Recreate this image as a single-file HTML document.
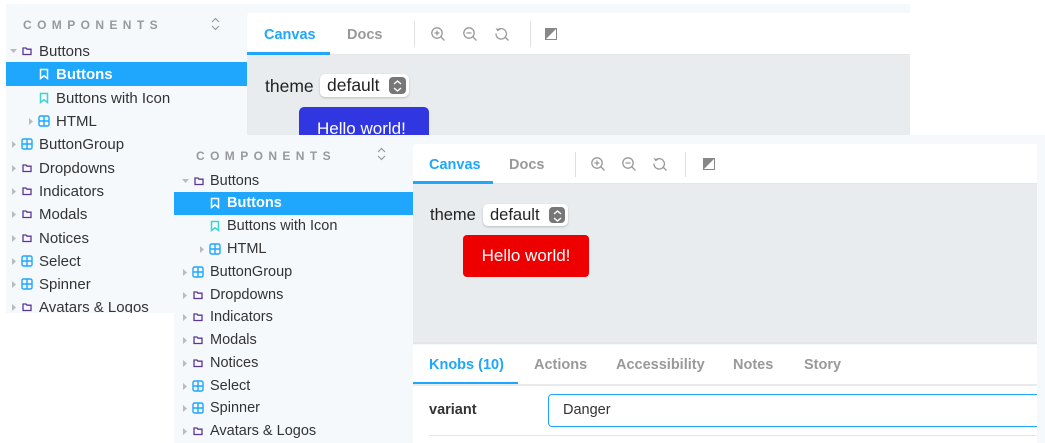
<!DOCTYPE html>
<html><head><meta charset="utf-8">
<style>
*{margin:0;padding:0;box-sizing:border-box}
body{width:1045px;height:443px;background:#fff;position:relative;overflow:hidden;font-family:"Liberation Sans",Arial,sans-serif;color:#333}
.a{position:absolute}
.bg{background:#f6f9fc}
.row{position:absolute;height:20px;line-height:20px;white-space:nowrap}
.hdr{position:absolute;font-size:12px;font-weight:bold;letter-spacing:5.4px;color:#999}
.sel{background:#1ea7fd;color:#fff;font-weight:bold}
.tab{position:absolute;font-weight:bold;font-size:14.5px;color:#999}
.tab.on{color:#1ea7fd}
.sep{position:absolute;width:1px;background:#e0e0e0}
svg{position:absolute;overflow:visible}
</style></head><body>
<svg width="0" height="0" style="position:absolute">
<defs>
<g id="fold"><path d="M2 3h3l1 1.2H10v5.3H2z" fill="none" stroke="#5b3596" stroke-width="1.3"/></g>
<g id="comp"><rect x="1" y="1" width="10" height="10" rx="1.5" fill="none" stroke="#1ea7fd" stroke-width="1.4"/><path d="M6 1v10M1 6h10" stroke="#1ea7fd" stroke-width="1.4"/></g>
<g id="bm"><path d="M2.5 1.5h7v9L6 7.8 2.5 10.5z" fill="none" stroke="#37d5d3" stroke-width="1.5"/></g>
<g id="bmw"><path d="M2.5 1.5h7v9L6 7.8 2.5 10.5z" fill="none" stroke="#fff" stroke-width="1.5"/></g>
<g id="car"><path d="M0 0l4 3.5-4 3.5z" fill="#bbb"/></g>
<g id="card"><path d="M0 0l7 0-3.5 4z" fill="#bbb"/></g>
<g id="zin"><circle cx="6" cy="6" r="5.2" fill="none" stroke="#999" stroke-width="1.3"/><path d="M6 3.5v5M3.5 6h5M10 10l3.5 3.5" stroke="#999" stroke-width="1.3"/></g>
<g id="zout"><circle cx="6" cy="6" r="5.2" fill="none" stroke="#999" stroke-width="1.3"/><path d="M3.5 6h5M10 10l3.5 3.5" stroke="#999" stroke-width="1.3"/></g>
<g id="zre"><path d="M2.2 3.5A5.2 5.2 0 1 1 1 6.5" fill="none" stroke="#999" stroke-width="1.3"/><path d="M0.5 1l2 3.3 3-1.6z" fill="#999"/><path d="M10 10l3.5 3.5" stroke="#999" stroke-width="1.3"/></g>
<g id="bgi"><rect x="0.5" y="0.5" width="11" height="11" fill="#fff" stroke="#888"/><path d="M0.5 11.5L11.5 0.5H0.5z" fill="#888"/></g>
<g id="tog"><path d="M0 4l3.5-3.5L7 4M0 8l3.5 3.5L7 8" fill="none" stroke="#999" stroke-width="1.2"/></g>
</defs></svg>

<!-- ===== First screenshot ===== -->
<div class="a bg" style="left:6px;top:4px;width:904px;height:131px"></div>
<div class="a bg" style="left:6px;top:4px;width:241px;height:309px"></div>
<div class="hdr" style="left:23px;top:18px">COMPONENTS</div>
<svg style="left:212px;top:18px" width="8" height="12"><use href="#tog"/></svg>
<div class="a sel" style="left:6px;top:62px;width:241px;height:24px"></div>
<div style="font-size:15px">
<svg style="left:10px;top:49px" width="8" height="5"><use href="#card"/></svg>
<svg style="left:21px;top:45px" width="12" height="12"><use href="#fold"/></svg>
<div class="row" style="left:39px;top:42px">Buttons</div>
<svg style="left:38px;top:68px" width="12" height="12"><use href="#bmw"/></svg>
<div class="row" style="left:56px;top:65px;color:#fff;font-weight:bold">Buttons</div>
<svg style="left:38px;top:92px" width="12" height="12"><use href="#bm"/></svg>
<div class="row" style="left:56px;top:89px">Buttons with Icon</div>
<svg style="left:29px;top:118px" width="5" height="7"><use href="#car"/></svg>
<svg style="left:38px;top:115px" width="12" height="12"><use href="#comp"/></svg>
<div class="row" style="left:56px;top:112px">HTML</div>
<svg style="left:12px;top:141px" width="5" height="7"><use href="#car"/></svg>
<svg style="left:21px;top:138px" width="12" height="12"><use href="#comp"/></svg>
<div class="row" style="left:39px;top:135px">ButtonGroup</div>
<svg style="left:12px;top:165px" width="5" height="7"><use href="#car"/></svg>
<svg style="left:21px;top:162px" width="12" height="12"><use href="#fold"/></svg>
<div class="row" style="left:39px;top:159px">Dropdowns</div>
<svg style="left:12px;top:188px" width="5" height="7"><use href="#car"/></svg>
<svg style="left:21px;top:185px" width="12" height="12"><use href="#fold"/></svg>
<div class="row" style="left:39px;top:182px">Indicators</div>
<svg style="left:12px;top:211px" width="5" height="7"><use href="#car"/></svg>
<svg style="left:21px;top:208px" width="12" height="12"><use href="#fold"/></svg>
<div class="row" style="left:39px;top:205px">Modals</div>
<svg style="left:12px;top:235px" width="5" height="7"><use href="#car"/></svg>
<svg style="left:21px;top:232px" width="12" height="12"><use href="#fold"/></svg>
<div class="row" style="left:39px;top:229px">Notices</div>
<svg style="left:12px;top:258px" width="5" height="7"><use href="#car"/></svg>
<svg style="left:21px;top:255px" width="12" height="12"><use href="#comp"/></svg>
<div class="row" style="left:39px;top:252px">Select</div>
<svg style="left:12px;top:281px" width="5" height="7"><use href="#car"/></svg>
<svg style="left:21px;top:278px" width="12" height="12"><use href="#comp"/></svg>
<div class="row" style="left:39px;top:275px">Spinner</div>
<svg style="left:12px;top:304px" width="5" height="7"><use href="#car"/></svg>
<svg style="left:21px;top:301px" width="12" height="12"><use href="#fold"/></svg>
<div class="row" style="left:39px;top:298px;height:15px;overflow:hidden">Avatars &amp; Logos</div>
</div>
<!-- main 1 -->
<div class="a" style="left:247px;top:13px;width:663px;height:42px;background:#fff;border-bottom:1px solid #e6e6e6;border-radius:4px 0 0 0"></div>
<div class="a" style="left:247px;top:55px;width:663px;height:80px;background:#e9ecee"></div>
<div class="tab on" style="left:264px;top:27px">Canvas</div>
<div class="a" style="left:247px;top:52px;width:83px;height:3px;background:#1ea7fd"></div>
<div class="tab" style="left:347px;top:27px">Docs</div>
<div class="sep" style="left:414px;top:21px;height:26px"></div>
<svg style="left:431px;top:27px" width="14" height="14"><use href="#zin"/></svg>
<svg style="left:463px;top:27px" width="14" height="14"><use href="#zout"/></svg>
<svg style="left:495px;top:27px" width="14" height="14"><use href="#zre"/></svg>
<div class="sep" style="left:530px;top:21px;height:26px"></div>
<svg style="left:545px;top:28px" width="12" height="12"><use href="#bgi"/></svg>
<div class="a" style="left:265px;top:76px;font-size:17.5px;color:#222">theme</div>
<div class="a" style="left:320px;top:74px;width:89px;height:23px;background:#fff;border-radius:5px;box-shadow:0 1px 2px rgba(0,0,0,.2);font-size:17.5px;color:#222;padding-left:7px;line-height:23px">default<div class="a" style="right:3px;top:3px;width:17px;height:17px;background:#777;border-radius:4px"><svg style="left:5px;top:3px" width="7" height="12"><path d="M0 4l3.5-3L7 4M0 8l3.5 3L7 8" fill="none" stroke="#fff" stroke-width="1.4"/></svg></div></div>
<div class="a" style="left:299px;top:107px;width:130px;height:28px;background:#3137e0;border-radius:5px 5px 0 0;overflow:hidden"><div class="a" style="left:18px;top:12px;color:#fff;font-size:17px;white-space:nowrap">Hello world!</div></div>

<!-- ===== Second screenshot ===== -->
<div class="a bg" style="left:174px;top:135px;width:871px;height:308px"></div>
<div class="hdr" style="left:196px;top:149px">COMPONENTS</div>
<svg style="left:378px;top:148px" width="8" height="12"><use href="#tog"/></svg>
<div class="a sel" style="left:174px;top:192px;width:239px;height:23px"></div>
<div style="font-size:14.5px">
<svg style="left:182px;top:179px" width="8" height="5"><use href="#card"/></svg>
<svg style="left:193px;top:175px" width="12" height="12"><use href="#fold"/></svg>
<div class="row" style="left:210px;top:171px">Buttons</div>
<svg style="left:209px;top:197px" width="12" height="12"><use href="#bmw"/></svg>
<div class="row" style="left:227px;top:193px;color:#fff;font-weight:bold">Buttons</div>
<svg style="left:209px;top:220px" width="12" height="12"><use href="#bm"/></svg>
<div class="row" style="left:227px;top:216px">Buttons with Icon</div>
<svg style="left:200px;top:246px" width="5" height="7"><use href="#car"/></svg>
<svg style="left:209px;top:243px" width="12" height="12"><use href="#comp"/></svg>
<div class="row" style="left:227px;top:239px">HTML</div>
<svg style="left:183px;top:269px" width="5" height="7"><use href="#car"/></svg>
<svg style="left:192px;top:266px" width="12" height="12"><use href="#comp"/></svg>
<div class="row" style="left:210px;top:262px">ButtonGroup</div>
<svg style="left:183px;top:292px" width="5" height="7"><use href="#car"/></svg>
<svg style="left:192px;top:289px" width="12" height="12"><use href="#fold"/></svg>
<div class="row" style="left:210px;top:285px">Dropdowns</div>
<svg style="left:183px;top:314px" width="5" height="7"><use href="#car"/></svg>
<svg style="left:192px;top:311px" width="12" height="12"><use href="#fold"/></svg>
<div class="row" style="left:210px;top:307px">Indicators</div>
<svg style="left:183px;top:337px" width="5" height="7"><use href="#car"/></svg>
<svg style="left:192px;top:334px" width="12" height="12"><use href="#fold"/></svg>
<div class="row" style="left:210px;top:330px">Modals</div>
<svg style="left:183px;top:360px" width="5" height="7"><use href="#car"/></svg>
<svg style="left:192px;top:357px" width="12" height="12"><use href="#fold"/></svg>
<div class="row" style="left:210px;top:353px">Notices</div>
<svg style="left:183px;top:383px" width="5" height="7"><use href="#car"/></svg>
<svg style="left:192px;top:380px" width="12" height="12"><use href="#comp"/></svg>
<div class="row" style="left:210px;top:376px">Select</div>
<svg style="left:183px;top:405px" width="5" height="7"><use href="#car"/></svg>
<svg style="left:192px;top:402px" width="12" height="12"><use href="#comp"/></svg>
<div class="row" style="left:210px;top:398px">Spinner</div>
<svg style="left:183px;top:428px" width="5" height="7"><use href="#car"/></svg>
<svg style="left:192px;top:425px" width="12" height="12"><use href="#fold"/></svg>
<div class="row" style="left:210px;top:421px">Avatars &amp; Logos</div>
</div>
<!-- main 2 -->
<div class="a" style="left:413px;top:144px;width:624px;height:40px;background:#fff;border-bottom:1px solid #e6e6e6;border-radius:4px 0 0 0"></div>
<div class="a" style="left:413px;top:184px;width:624px;height:160px;background:#e9ecee;border-bottom:2px solid #e2e4e6"></div>
<div class="tab on" style="left:429px;top:157px">Canvas</div>
<div class="a" style="left:413px;top:181px;width:80px;height:3px;background:#1ea7fd"></div>
<div class="tab" style="left:509px;top:157px">Docs</div>
<div class="sep" style="left:575px;top:152px;height:25px"></div>
<svg style="left:591px;top:157px" width="14" height="14"><use href="#zin"/></svg>
<svg style="left:622px;top:157px" width="14" height="14"><use href="#zout"/></svg>
<svg style="left:653px;top:157px" width="14" height="14"><use href="#zre"/></svg>
<div class="sep" style="left:685px;top:152px;height:25px"></div>
<svg style="left:703px;top:158px" width="12" height="12"><use href="#bgi"/></svg>
<div class="a" style="left:430px;top:206px;font-size:16.5px;color:#222">theme</div>
<div class="a" style="left:483px;top:204px;width:85px;height:22px;background:#fff;border-radius:5px;box-shadow:0 1px 2px rgba(0,0,0,.2);font-size:16.5px;color:#222;padding-left:7px;line-height:22px">default<div class="a" style="right:3px;top:3px;width:16px;height:16px;background:#777;border-radius:4px"><svg style="left:4.5px;top:2.5px" width="7" height="12"><path d="M0 4l3.5-3L7 4M0 8l3.5 3L7 8" fill="none" stroke="#fff" stroke-width="1.4"/></svg></div></div>
<div class="a" style="left:463px;top:235px;width:126px;height:42px;background:#ee0000;border-radius:4px;color:#fff;font-size:17px;line-height:42px;text-align:center">Hello world!</div>
<!-- addons -->
<div class="a" style="left:413px;top:345px;width:624px;height:98px;background:#fff;overflow:hidden">
<div class="tab on" style="left:16px;top:12px">Knobs (10)</div>
<div class="a" style="left:0;top:37px;width:105px;height:3px;background:#1ea7fd"></div>
<div class="tab" style="left:121px;top:12px">Actions</div>
<div class="tab" style="left:203px;top:12px">Accessibility</div>
<div class="tab" style="left:320px;top:12px">Notes</div>
<div class="tab" style="left:391px;top:12px">Story</div>
<div class="a" style="left:0;top:39px;width:624px;height:2px;background:#eaeaea"></div>
<div class="a" style="left:16px;top:57px;font-weight:bold;font-size:14.5px;color:#333">variant</div>
<div class="a" style="left:135px;top:49px;width:520px;height:33px;border:1px solid #1ea7fd;border-radius:4px;font-size:14.5px;line-height:31px;padding-left:14px;color:#333">Danger</div>
<div class="a" style="left:16px;top:90px;width:608px;height:1px;background:#e6e6e6"></div>
</div>
</body></html>
